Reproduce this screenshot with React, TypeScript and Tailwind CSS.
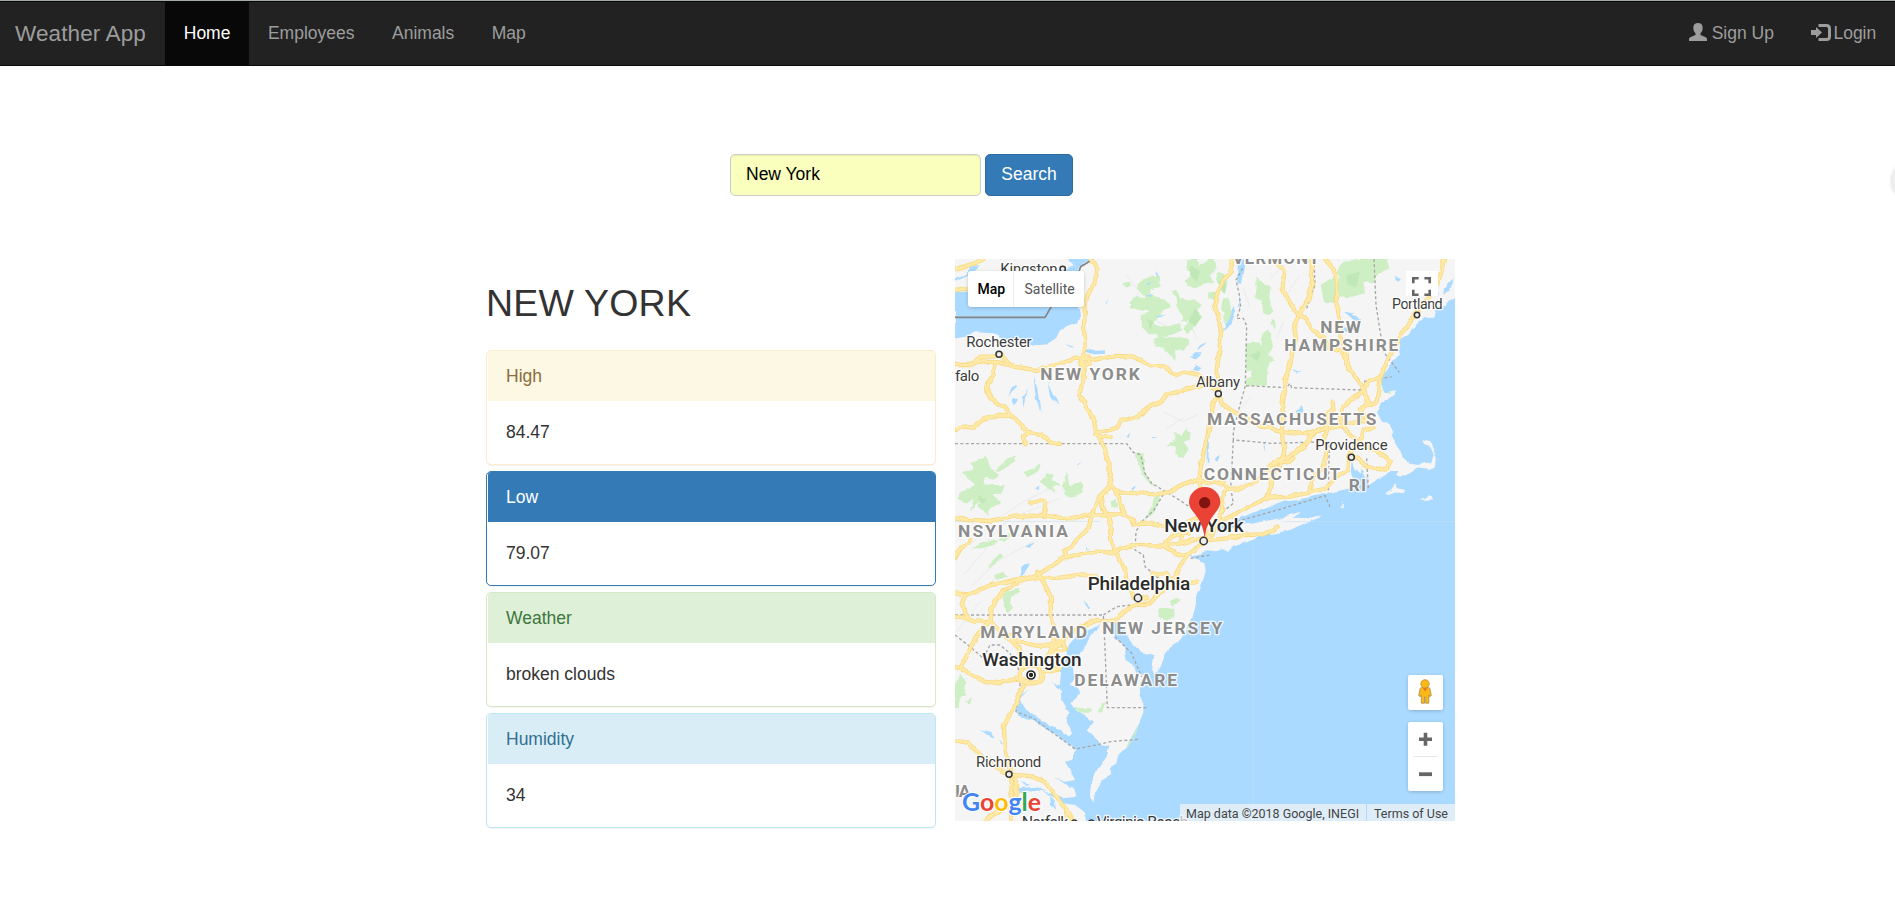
import type { ReactNode } from "react";

const WATER = "#aadaff";
const LAND = "#f5f5f5";
const GREEN = "#ceeec4";

const parks: string[] = [
  "575,75 598,66 630,62 632,95 602,103 600,118 625,128 650,140 665,155 640,165 628,185 610,205 650,215 690,205 695,225 670,238 638,245 625,262 622,238 598,238 575,215 575,180 600,170 570,165 540,160 540,138 555,125 588,130 560,100",
  "665,108 682,105 690,130 725,138 738,150 718,140 735,135 752,148 742,165 755,185 735,215 712,235 700,222 722,195 690,200 700,185 685,165 680,135",
  "612,250 640,245 715,250 718,268 700,288 675,285 678,318 660,300 635,275 615,275",
  "518,85 540,80 543,92 530,98",
  "712,12 742,12 748,30 768,18 776,12 792,12 800,40 780,60 790,82 752,92 735,100 712,92 708,75 725,60 710,35",
  "800,50 820,55 832,80 825,118 812,100 800,80",
  "775,110 800,108 795,135 775,132",
  "820,130 838,130 842,160 850,185 832,200 830,213 816,190 825,175 810,160",
  "918,65 930,78 945,88 962,95 958,125 968,170 958,180 940,175 935,135 915,130 920,100",
  "965,190 975,200 976,222 965,205",
  "887,265 928,262 935,278 935,240 952,228 966,240 967,270 957,300 975,315 957,325 952,345 950,392 888,392 888,370 905,365 905,350 888,345",
  "1112,90 1150,65 1170,72 1160,50 1180,22 1220,12 1310,12 1318,40 1282,60 1270,85 1240,80 1245,115 1190,130 1170,120 1160,145 1122,140",
  "1298,380 1312,395 1325,415 1300,408",
  "670,530 695,540 708,522 722,536 718,556 700,560 715,580 700,610 676,596 678,575 648,570 680,552",
  "62,625 110,605 122,640 150,660 135,672 105,665 100,685 118,690 165,690 155,715 128,718 150,745 120,760 115,782 85,755 88,740 60,768 70,735 45,745 22,730 35,710 60,700 75,685 50,670 35,650 70,645",
  "172,610 198,603 195,618 150,650 135,648",
  "250,640 272,628 265,650 235,665 220,652",
  "290,655 312,660 305,672 332,690 310,695 320,710 302,705 290,700 272,680",
  "338,690 350,650 358,690 395,680 398,712 365,728 345,720",
  "445,745 458,738 462,768 452,768",
  "482,740 498,732 502,758 485,755",
  "580,595 585,655 605,685 630,695 602,690 578,660 555,595",
  "612,728 632,716 612,775 580,798 605,755",
  "60,885 100,860 145,855 132,870 95,880 78,880",
  "115,930 150,895 160,902 118,940",
  "135,960 160,950 170,965 140,975",
  "158,1030 165,1010 205,998 210,1010 180,1025 185,1060 170,1075",
  "145,850 170,838 210,815 200,832 165,862",
  "625,1065 640,1058 675,1062 672,1085 650,1098 626,1085",
  "658,1040 680,1025 692,1036 672,1052",
  "370,1355 395,1360 425,1360 420,1374 385,1372",
  "455,1345 470,1340 455,1370 445,1368",
  "15,1290 30,1260 52,1280 40,1300 50,1320 30,1330 25,1360 15,1358",
  "48,1340 65,1325 62,1350",
];

const coast =
  "1515,128 1490,140 1485,165 1470,150 1455,165 1450,185 1425,185 1408,197 1395,215 1382,222 1375,240 1352,252 1345,285 1350,302 1328,318 1312,345 1296,362 1290,385 1305,412 1338,406 1330,424 1306,434 1290,455 1280,470 1296,500 1322,508 1330,528 1325,548 1340,572 1352,590 1360,612 1378,626 1405,630 1440,622 1448,604 1440,580 1416,552 1440,558 1454,598 1453,636 1438,645 1405,640 1375,656 1350,668 1338,662 1345,648 1320,648 1292,670 1270,682 1255,694 1252,670 1242,650 1232,640 1228,655 1212,640 1205,620 1202,650 1212,680 1200,700 1150,712 1125,718 1080,726 1040,735 990,742 950,756 920,768 880,785 840,800 812,815 800,832 830,824 870,810 900,806 950,797 1000,790 985,800 1015,782 1050,770 1030,788 1080,790 1122,778 1080,800 1020,825 970,836 940,838 910,854 880,865 850,875 835,888 820,880 790,888 770,886 750,905 722,908 740,916 763,925 767,945 760,975 750,1008 742,1022 735,1060 724,1100 710,1125 690,1155 660,1175 645,1200 632,1235 612,1253 604,1240 610,1200 575,1190 550,1170 535,1150 518,1120 500,1098 488,1102 494,1145 522,1175 530,1215 552,1230 560,1256 582,1260 570,1285 570,1320 580,1335 580,1375 568,1405 550,1440 530,1475 505,1500 498,1525 480,1545 485,1560 462,1572 445,1592 435,1610 430,1645 420,1615 425,1575 440,1545 470,1505 478,1475 452,1470 440,1450 412,1425 432,1400 412,1385 385,1375 365,1345 388,1310 378,1295 360,1290 375,1270 372,1238 390,1195 412,1165 422,1145 448,1108 415,1125 410,1122 385,1145 380,1142 352,1175 346,1205 334,1238 330,1290 308,1285 336,1305 333,1335 355,1375 350,1400 366,1435 358,1445 330,1425 300,1415 268,1390 245,1375 220,1360 210,1330 240,1300 205,1328 196,1365 214,1385 250,1395 290,1425 330,1445 352,1465 378,1484 368,1515 345,1520 360,1545 375,1575 345,1580 310,1565 372,1600 380,1625 340,1630 275,1610 340,1645 375,1650 400,1668 410,1701 1515,1701";

const islands: string[] = [
  "1305,718 1325,705 1335,688 1345,700 1365,705 1362,715 1335,712 1312,720",
  "1410,732 1430,728 1442,722 1450,736 1435,738",
  "1170,758 1178,740 1178,760",
  "1235,650 1242,645 1250,672 1242,668",
];

const lakes: string[] = [
  "15,112 120,105 300,85 340,50 370,30 385,48 395,85 384,150 390,180 382,205 360,212 330,226 318,250 290,268 250,272 215,258 160,250 130,235 70,232 45,245 15,250",
  "15,80 60,60 90,30 60,35 50,60 15,72",
  "355,12 430,12 390,35 370,60 330,58 375,35",
  "404,276 430,285 465,283 465,297 430,298 405,290",
  "250,365 262,400 272,475 258,430",
  "292,378 302,405 330,450 300,425",
  "235,400 225,430 220,460 218,430",
  "205,390 175,425 185,400",
  "185,435 205,430 190,450",
  "350,265 370,278 360,277",
  "460,150 475,130 470,142",
  "718,310 735,292 755,292 738,315",
  "745,285 750,272 770,262 758,275",
  "725,345 740,330 758,340 745,348",
  "590,92 615,75 600,92",
  "585,122 606,118 600,125",
  "610,186 650,178 632,186",
  "615,48 625,58 622,68",
  "865,12 882,12 882,40 872,85 862,80 862,50",
  "850,150 855,165 840,215 820,228 835,195 845,165",
  "868,120 872,150 868,170",
  "1185,170 1212,175 1235,195 1215,195 1200,182",
  "1180,215 1230,210 1225,222 1170,230",
  "1040,470 1058,450 1060,475 1045,485",
  "770,520 778,530 775,620 770,620",
  "790,610 810,600 800,618",
  "940,560 948,560 943,590",
  "530,545 542,530 535,550",
  "600,545 625,546 605,550",
  "380,630 398,618 385,630",
  "255,700 268,692 266,706",
  "545,700 560,690 548,708",
  "1482,100 1510,70 1505,95 1480,120",
  "1450,120 1465,95 1462,125",
  "1335,60 1350,75 1338,80",
  "1025,345 1045,352 1060,350 1040,356",
  "210,970 220,930 240,925 222,960",
  "225,875 250,862 240,878",
  "405,865 415,885 408,880",
  "400,1035 420,1055 412,1060",
  "92,1425 125,1435 130,1448 112,1440",
  "145,1452 155,1470 150,1470",
  "200,1600 260,1595 290,1610 250,1605 210,1615",
  "300,1625 315,1640 318,1665 302,1645",
  "210,1580 245,1590 230,1592",
  "720,905 755,898 780,903 750,912",
];

const roads: string[] = [
  "425,12 442,38 440,62 425,98 412,125 405,150 402,220 407,270 398,310 402,360 388,420 405,440 415,465 432,498 438,530 458,570 468,600 475,620 476,650 484,680 468,705 446,735 428,770 415,820 392,845 368,872 345,885 348,900 325,920 270,955 200,982 160,1008 135,1035 125,1060 122,1095 85,1135 60,1180 42,1220 30,1240 15,1236",
  "15,330 60,330 90,320 150,322 190,335 260,345 290,338 330,322 380,308 430,315 500,303 550,305 580,322 600,330 645,335 660,352 680,358 700,350 740,358 760,375 790,400 805,410",
  "438,530 480,525 500,518 515,498 560,485 600,455 640,435 655,418 700,405 740,395 770,385 805,405",
  "15,525 40,515 70,518 100,493 150,482 180,478 215,510 235,532 270,540 290,550 300,562 330,567",
  "80,320 95,305 130,305 155,300 175,325",
  "435,540 455,545 482,548",
  "138,322 130,360 112,385 108,400 125,430 150,450 165,455 180,478",
  "240,532 222,545 228,568",
  "15,42 40,35 75,25 100,12",
  "15,105 55,100",
  "15,790 60,795 120,798 180,785 220,785 280,780 320,788 380,790 425,778 520,778 545,790 555,808 600,805 640,815",
  "240,742 265,738 285,742 288,760 282,782",
  "480,690 495,705 520,712 560,715 620,718 660,710 690,692 728,678 755,678 810,685 822,672",
  "845,12 845,50 815,80 808,105 795,150 802,180 815,220 806,300 800,350 808,380 805,415 790,445 780,510 768,560 755,620 748,680 755,720 768,770 765,830",
  "805,410 815,445 850,470 890,490 930,512 965,515 980,528 1080,535 1130,520 1190,508 1255,493",
  "1085,12 1085,50 1090,80 1075,130 1048,180 1032,210 1038,250 1025,300 1018,340 1005,370 1008,405 995,440 1000,480 995,530 1003,590 990,630 968,655 965,690 950,730",
  "965,12 1002,45 998,100 1012,132 1045,180 1070,190 1080,218 1120,248 1135,275 1175,290 1190,315 1200,345 1235,390 1245,415 1260,450",
  "1125,12 1152,45 1158,80 1160,150 1170,195 1172,250 1190,300 1195,345",
  "1482,12 1475,50 1460,90 1430,135 1400,172 1378,205 1350,240 1338,270 1312,315 1300,345 1288,378 1280,440 1250,452 1235,465",
  "1288,370 1255,380 1240,412 1200,435 1180,455 1170,490 1180,520 1215,555 1260,580 1300,600 1322,618 1310,640 1285,645 1250,635 1228,612 1205,605",
  "1240,400 1252,445 1230,462 1240,480 1268,495 1270,518 1242,522 1235,548 1210,580 1195,605 1192,645 1150,670 1128,700 1080,712 1020,725 955,728 910,748 870,770 820,795 785,825 762,855",
  "1132,522 1125,545 1128,610 1120,640 1088,665 1082,708",
  "1148,440 1150,465 1130,475 1135,500 1125,520",
  "1090,535 1065,570 1035,595 1005,608 965,632 920,680 890,690 860,705 830,700 820,680",
  "960,632 985,618 1015,622 1030,610",
  "828,700 815,730 820,760 800,810 785,840",
  "762,857 830,850 880,840 940,838 970,825 982,812",
  "480,700 455,722 460,760 470,778",
  "490,700 508,728 515,755 525,778",
  "478,785 485,820 480,850 490,880 505,905 525,940 530,985 545,1010 552,1030 590,1030",
  "345,910 390,895 440,890 490,892 520,880 560,870 640,872 690,865 755,850",
  "15,1015 50,1018 85,1005 120,992 190,975 240,970 330,968 400,958 435,965 450,980 500,985 530,980",
  "765,860 720,895 690,930 680,960 660,985 625,1018 600,1045 560,1050 520,1070 495,1098 440,1095 400,1112 365,1130 335,1160 310,1185 280,1215",
  "610,955 650,955 660,970 690,980 740,980",
  "640,872 665,888 690,900 720,895",
  "640,872 662,845 690,835 720,838",
  "690,865 700,835 712,800 735,790",
  "262,950 285,990 303,1025 302,1080 312,1110 315,1170",
  "15,1085 50,1088 70,1100 120,1098 150,1130 175,1152 210,1160 260,1172 330,1172",
  "178,1140 205,1180 218,1240",
  "30,1240 60,1255 95,1275 150,1285 200,1270 250,1285 278,1275 280,1250 330,1240",
  "222,1290 200,1340 178,1380 162,1415 165,1480 180,1545 188,1600 178,1650 182,1701",
  "15,1455 55,1465 90,1500 120,1525 180,1560 240,1563 285,1580 310,1615 345,1660 370,1701",
  "195,1560 200,1620 160,1660 125,1680 105,1701",
  "45,1018 35,1050 55,1085",
  "15,910 30,885 50,868 60,855",
  "345,1665 350,1701",
  "218,1240 240,1230 268,1235 278,1255 268,1280 240,1285 215,1275 212,1255 218,1240",
  "392,305 415,305 418,328 395,330 392,305",
  "305,1165 340,1160 345,1185 300,1190 305,1165",
];

const borders: string[] = [
  "15,566 530,566 550,592 572,600 585,655 605,685 630,700 680,730 718,755",
  "640,718 612,765 575,800 558,830 555,885 580,900 585,935 625,970",
  "15,1080 460,1080 465,1180 472,1358 595,1358",
  "460,1080 500,1055 540,1050",
  "495,1145 545,1195 575,1265",
  "15,1140 60,1175 100,1210 120,1170 150,1170 180,1195 205,1240 210,1290 198,1370 250,1390 375,1482 440,1470 480,1460 565,1453",
  "878,40 858,75 868,120 872,155 860,190 880,190 890,212 886,392 870,450 850,530 850,555 965,565 1138,560 1135,715",
  "888,392 1010,398 1020,385 1025,398 1230,405 1245,378 1325,365",
  "1272,12 1278,150 1300,290 1348,352",
  "1092,12 1095,90 1070,160",
  "850,555 842,700 850,745 825,765",
  "830,808 1000,760 1125,722 1140,755",
  "1250,610 1255,700",
  "722,910 780,900",
];

type Label = { t: string; x: number; y: number; w: number; s: number };

const states: Label[] = [
  { t: "VERMONT", x: 848, y: 27, w: 260, s: 50 },
  { t: "NEW YORK", x: 271, y: 376, w: 298, s: 52 },
  { t: "NEW", x: 1111, y: 235, w: 122, s: 52 },
  { t: "HAMPSHIRE", x: 1003, y: 288, w: 342, s: 52 },
  { t: "MASSACHUSETTS", x: 771, y: 509, w: 508, s: 52 },
  { t: "CONNECTICUT", x: 761, y: 674, w: 410, s: 52 },
  { t: "RI", x: 1196, y: 708, w: 52, s: 52 },
  { t: "NSYLVANIA", x: 24, y: 847, w: 330, s: 52 },
  { t: "NEW JERSEY", x: 457, y: 1138, w: 360, s: 52 },
  { t: "MARYLAND", x: 91, y: 1149, w: 320, s: 52 },
  { t: "DELAWARE", x: 373, y: 1293, w: 308, s: 52 },
  { t: "IA", x: 15, y: 1627, w: 46, s: 52 },
];

const cities: Label[] = [
  { t: "Kingston", x: 151, y: 56, w: 172, s: 45 },
  { t: "Rochester", x: 49, y: 277, w: 196, s: 45 },
  { t: "falo", x: 15, y: 378, w: 73, s: 45 },
  { t: "Albany", x: 738, y: 395, w: 132, s: 45 },
  { t: "Portland", x: 1326, y: 162, w: 152, s: 43 },
  { t: "Providence", x: 1096, y: 586, w: 217, s: 45 },
  { t: "Richmond", x: 78, y: 1537, w: 196, s: 45 },
  { t: "Norfolk", x: 215, y: 1719, w: 140, s: 48 },
  { t: "Virginia Beach", x: 440, y: 1719, w: 275, s: 48 },
];

const metros: Label[] = [
  { t: "New York", x: 643, y: 831, w: 238, s: 57 },
  { t: "Philadelphia", x: 413, y: 1004, w: 308, s: 57 },
  { t: "Washington", x: 97, y: 1233, w: 298, s: 57 },
];

const dots: [number, number, number][] = [
  [338, 42, 8],
  [147, 298, 9],
  [805, 416, 9],
  [1401, 180, 8],
  [1204, 607, 9],
  [177, 1558, 9],
  [564, 1029, 11],
  [761, 858, 11],
  [373, 1703, 8],
  [424, 1703, 8],
];

function MapLabels({ items, className }: { items: Label[]; className: string }) {
  return (
    <g className={className} stroke="#ffffff" strokeOpacity="0.8" strokeLinejoin="round" paintOrder="stroke">
      {items.map((l) => (
        <text key={l.t + l.y} x={l.x} y={l.y} fontSize={l.s} textLength={l.w}>
          {l.t}
        </text>
      ))}
    </g>
  );
}

function MapCanvas() {
  return (
    <svg
      className="block h-[562px] w-[500px] font-['Roboto',sans-serif]"
      viewBox="15 12 1500 1686"
      preserveAspectRatio="none"
    >
      <defs>
        <filter id="ragged" filterUnits="userSpaceOnUse" x="0" y="0" width="1530" height="1710">
          <feTurbulence type="fractalNoise" baseFrequency="0.05" numOctaves="2" seed="4" />
          <feDisplacementMap in="SourceGraphic" scale="10" xChannelSelector="R" yChannelSelector="G" />
        </filter>
        <filter id="wobble" filterUnits="userSpaceOnUse" x="0" y="0" width="1530" height="1710">
          <feTurbulence type="fractalNoise" baseFrequency="0.03" numOctaves="2" seed="9" />
          <feDisplacementMap in="SourceGraphic" scale="13" xChannelSelector="R" yChannelSelector="G" />
        </filter>
      </defs>
      <rect x="15" y="12" width="1500" height="1689" fill={LAND} />
      <g stroke="#ebebeb" strokeWidth="3" fill="none">
        <path d="M60 870L130 800L220 740L300 700M90 880L180 790L330 730M40 960L110 880M60 1000L140 920L250 860M90 1010L160 950M20 1130L90 1040M560 120L600 60M640 470L700 500L740 480M650 520L700 490M960 70L1000 30M1010 120L1050 60M880 100L900 160M980 250L1000 200M900 330L950 300M860 470L900 430M530 60L560 100M700 160L740 250M620 200L690 230" />
      </g>
      <g filter="url(#ragged)">
        <g fill={GREEN}>
          {parks.map((p) => (
            <polygon key={p} points={p} />
          ))}
        </g>
        <g fill="#c0e8b6">
          <path d="M735 160L755 185L735 215L715 200L722 185ZM720 30L750 50L740 80L720 60ZM590 190L610 200L600 225ZM800 80L830 85L825 115ZM895 300L930 290L925 320ZM1190 60L1230 50L1220 95L1190 90ZM80 720L110 730L100 750Z" />
        </g>
      </g>
      <g filter="url(#wobble)">
        <g fill={WATER}>
          {lakes.map((p) => (
            <polygon key={p} points={p} />
          ))}
          <polygon points={coast} />
        </g>
        <rect x="1480" y="150" width="50" height="1560" fill={WATER} />
        <rect x="420" y="1670" width="1100" height="50" fill={WATER} />
        <g fill={LAND}>
          {islands.map((p) => (
            <polygon key={p} points={p} />
          ))}
        </g>
      </g>
      <rect x="1490" y="180" width="30" height="1530" fill={WATER} />
      <rect x="440" y="1680" width="1080" height="24" fill={WATER} />
      <path d="M530 1478Q558 1440 562 1415" stroke={GREEN} strokeWidth="4" fill="none" />
      <path d="M910 856V1701M1000 800H1515M15 799H450" stroke="#c4dff2" strokeOpacity="0.6" strokeWidth="3" fill="none" />
      <path d="M15 187H285L330 110L385 55L392 35L430 12" stroke="#858585" strokeWidth="5" fill="none" />
      <g stroke="#a6a6a6" strokeWidth="4" strokeDasharray="9 7" fill="none">
        {borders.map((b) => (
          <polyline key={b} points={b} />
        ))}
      </g>
      <g filter="url(#wobble)" fill="none" strokeLinejoin="round" strokeLinecap="round">
        <g stroke="#f8d980" strokeWidth="13">
          {roads.map((r) => (
            <polyline key={r} points={r} />
          ))}
        </g>
        <g stroke="#ffe9a6" strokeWidth="8">
          {roads.map((r) => (
            <polyline key={r} points={r} />
          ))}
        </g>
      </g>
      <g fill="#eeeeee" stroke="#333333" strokeWidth="4.5">
        {dots.map(([x, y, r]) => (
          <circle key={x} cx={x} cy={y} r={r} />
        ))}
      </g>
      <circle cx="243" cy="1260" r="12" fill="#ffffff" stroke="#222222" strokeWidth="5" />
      <circle cx="243" cy="1260" r="6.5" fill="#222222" />
      <MapLabels items={states} className="fill-[#8c8c8c] stroke-[8px] font-bold" />
      <MapLabels items={cities} className="fill-[#3c3c3c] stroke-[8px]" />
      <MapLabels items={metros} className="fill-[#2b2b2b] stroke-[9px] font-medium" />
      <path
        d="M764 850C760 815 749 795 733 775C722 761 717 753 717 741A47 45 0 0 1 811 741C811 753 805 761 795 775C779 795 768 815 764 850Z"
        fill="#ea4335"
      />
      <circle cx="764" cy="743" r="17" fill="#811411" />
    </svg>
  );
}

function WeatherMap() {
  return (
    <div className="relative h-[562px] w-[500px] overflow-hidden font-['Roboto',sans-serif]">
      <MapCanvas />
      <div className="absolute top-[12px] left-[13px] flex h-[36px] rounded-[3px] bg-white text-[14px] leading-[36px] shadow-[0_1px_4px_-1px_rgba(0,0,0,0.3)]">
        <span className="w-[46px] border-r border-[#eeeeee] pl-[9.5px] font-medium text-black">Map</span>
        <span className="w-[70px] pl-[10.5px] text-[#565656]">Satellite</span>
      </div>
      <div className="absolute top-[12px] left-[451px] flex h-[25px] w-[32px] justify-center bg-white pt-[6px] pr-[1px]">
        <svg className="size-[19px] shrink-0 overflow-visible" viewBox="0 0 19 19" fill="none" stroke="#666666" strokeWidth="2.6">
          <path d="M1.3 6.3V1.3H6.6M12.4 1.3H17.7V6.3M17.7 12.7V17.7H12.4M6.6 17.7H1.3V12.7" />
        </svg>
      </div>
      <div className="absolute top-[416px] left-[453px] flex size-[35px] items-center justify-center rounded-[2px] bg-white pr-[1px] pb-[2px] shadow-[0_1px_4px_-1px_rgba(0,0,0,0.3)]">
        <svg className="h-[25px] w-[14px]" viewBox="0 0 14 25">
          <path
            d="M3.6 8.2H10.4Q11.6 8.6 12 10L13.3 16.6L11.6 17.6L10.8 16V24.2H7.7V18H6.5V24.2H3.3V16L2.4 17.6L.7 16.6L2 10Q2.4 8.6 3.6 8.2Z"
            fill="#fbb917"
            stroke="#a98a4a"
            strokeWidth=".8"
          />
          <path d="M4.8 9L7 12.4L9.3 9Z" fill="#e8711c" />
          <circle cx="7" cy="4.9" r="4.2" fill="#fbb917" stroke="#c08f2e" strokeWidth=".8" />
        </svg>
      </div>
      <div className="absolute top-[463px] left-[453px] flex h-[69px] w-[35px] flex-col items-center rounded-[2px] bg-white shadow-[0_1px_4px_-1px_rgba(0,0,0,0.3)]">
        <svg className="h-[34px] w-[13px]" viewBox="0 0 13 34" stroke="#666666" strokeWidth="3.6">
          <path d="M0 17.3H13M6.5 10.8V23.8" />
        </svg>
        <div className="h-px w-[24px] bg-[#e6e6e6]" />
        <svg className="h-[34px] w-[13px]" viewBox="0 0 13 34" stroke="#666666" strokeWidth="3.8">
          <path d="M0 17.2H13" />
        </svg>
      </div>
      <svg className="absolute top-[526px] left-[4px] h-[36px] w-[90px]" viewBox="0 0 90 36">
        <text
          x="3"
          y="26.3"
          fontSize="25.5"
          textLength="79"
          lengthAdjust="spacingAndGlyphs"
          stroke="#ffffff"
          strokeWidth="2"
          paintOrder="stroke"
          className="font-['Lato',sans-serif] font-bold"
        >
          <tspan fill="#4285f4">G</tspan>
          <tspan fill="#ea4335">o</tspan>
          <tspan fill="#fbbc05">o</tspan>
          <tspan fill="#4285f4">g</tspan>
          <tspan fill="#34a853">l</tspan>
          <tspan fill="#ea4335">e</tspan>
        </text>
      </svg>
      <div className="absolute right-0 bottom-0 flex h-[17px] gap-px text-[12.5px] leading-[19px] whitespace-nowrap text-[#444444]">
        <span className="w-[186px] bg-[#f5f5f5]/70 pl-[6px]">Map data ©2018 Google, INEGI</span>
        <span className="w-[88px] bg-[#f5f5f5]/70 pl-[7px]">Terms of Use</span>
      </div>
    </div>
  );
}

function NavItem({ active, children }: { active?: boolean; children: ReactNode }) {
  return (
    <a
      className={
        active
          ? "flex h-full items-center bg-[#080808] px-[18.75px] text-white"
          : "flex h-full items-center px-[18.75px] text-[#9d9d9d]"
      }
    >
      {children}
    </a>
  );
}

function Navbar() {
  return (
    <nav className="flex h-[65px] items-center justify-between border-y border-[#080808] bg-[#222222]">
      <div className="flex h-full items-center">
        <span className="w-[165px] pb-[1px] pl-[15px] text-[22.5px] leading-[25px] tracking-[0.12px] whitespace-nowrap text-[#9d9d9d]">
          Weather App
        </span>
        <NavItem active>Home</NavItem>
        <NavItem>Employees</NavItem>
        <NavItem>Animals</NavItem>
        <NavItem>Map</NavItem>
      </div>
      <div className="flex h-full items-center">
        <NavItem>
          <svg className="mr-[5px] mb-[4px] h-[18px] w-[18px]" viewBox="0 0 18 18" fill="currentColor">
            <path d="M9 0C12 0 13.7 1.8 13.7 4.8C13.7 7.3 12.8 9.2 11.5 10.3V12L16.8 14.3Q18 15 18 16.2V18H0V16.2Q0 15 1.2 14.3L6.5 12V10.3C5.2 9.2 4.3 7.3 4.3 4.8C4.3 1.8 6 0 9 0Z" />
          </svg>
          Sign Up
        </NavItem>
        <NavItem>
          <svg className="mr-[2px] mb-[3px] h-[17px] w-[20px]" viewBox="0 0 20 17">
            <path d="M0 6H5V3L11 8.6L5 14V11H0Z" fill="currentColor" />
            <path
              d="M7.5 1.5H15.5Q18.5 1.5 18.5 4.5V12.5Q18.5 15.5 15.5 15.5H7.5"
              fill="none"
              stroke="currentColor"
              strokeWidth="3"
            />
          </svg>
          Login
        </NavItem>
      </div>
    </nav>
  );
}

const panels = [
  { title: "High", value: "84.47", frame: "border-[#faebcc]", head: "bg-[#fcf8e3] text-[#8a6d3b]" },
  { title: "Low", value: "79.07", frame: "border-[#337ab7]", head: "bg-[#337ab7] text-white" },
  { title: "Weather", value: "broken clouds", frame: "border-[#d6e9c6]", head: "bg-[#dff0d8] text-[#3c763d]" },
  { title: "Humidity", value: "34", frame: "border-[#bce8f1]", head: "bg-[#d9edf7] text-[#31708f]" },
];

function Panel({ title, value, frame, head }: (typeof panels)[number]) {
  return (
    <section className={`h-[115px] rounded-[5px] border bg-white shadow-[0_1px_1px_rgba(0,0,0,0.05)] ${frame}`}>
      <div className={`ml-px h-[50px] rounded-t-[3px] px-[18px] py-[12.5px] leading-[25px] ${head}`}>{title}</div>
      <div className="px-[19px] py-[18.75px] leading-[25px]">{value}</div>
    </section>
  );
}

export default function App() {
  return (
    <div className="relative h-[911px] w-full overflow-hidden border-t border-[#a3aaa6] bg-white font-['Liberation_Sans',Arial,sans-serif] text-[17.5px] leading-[25px] text-[#333333]">
      <Navbar />
      <form className="mt-[88px] ml-[730px] flex gap-[4px]">
        <input
          className="h-[42px] w-[251px] rounded-[5px] border border-[#cccccc] bg-[#faffbd] px-[15px] pb-[2px] text-black shadow-[inset_0_1px_1px_rgba(0,0,0,0.075)] outline-none"
          defaultValue="New York"
        />
        <button
          type="button"
          className="h-[42px] w-[88px] rounded-[5px] border border-[#2e6da4] bg-[#337ab7] pb-[2px] text-white"
        >
          Search
        </button>
      </form>
      <main className="mt-[63px] ml-[486px] flex gap-[19px]">
        <div className="w-[450px] pt-[24px]">
          <h2 className="text-[37.5px] leading-[41px] tracking-[0.2px]">NEW YORK</h2>
          <div className="mt-[26px] flex flex-col gap-[6px]">
            {panels.map((p) => (
              <Panel key={p.title} {...p} />
            ))}
          </div>
        </div>
        <WeatherMap />
      </main>
      <div className="absolute top-[162px] left-[1892px] h-[36px] w-[36px] rounded-full bg-[#efefef] shadow-[0_0_4px_rgba(0,0,0,0.2)]" />
    </div>
  );
}
